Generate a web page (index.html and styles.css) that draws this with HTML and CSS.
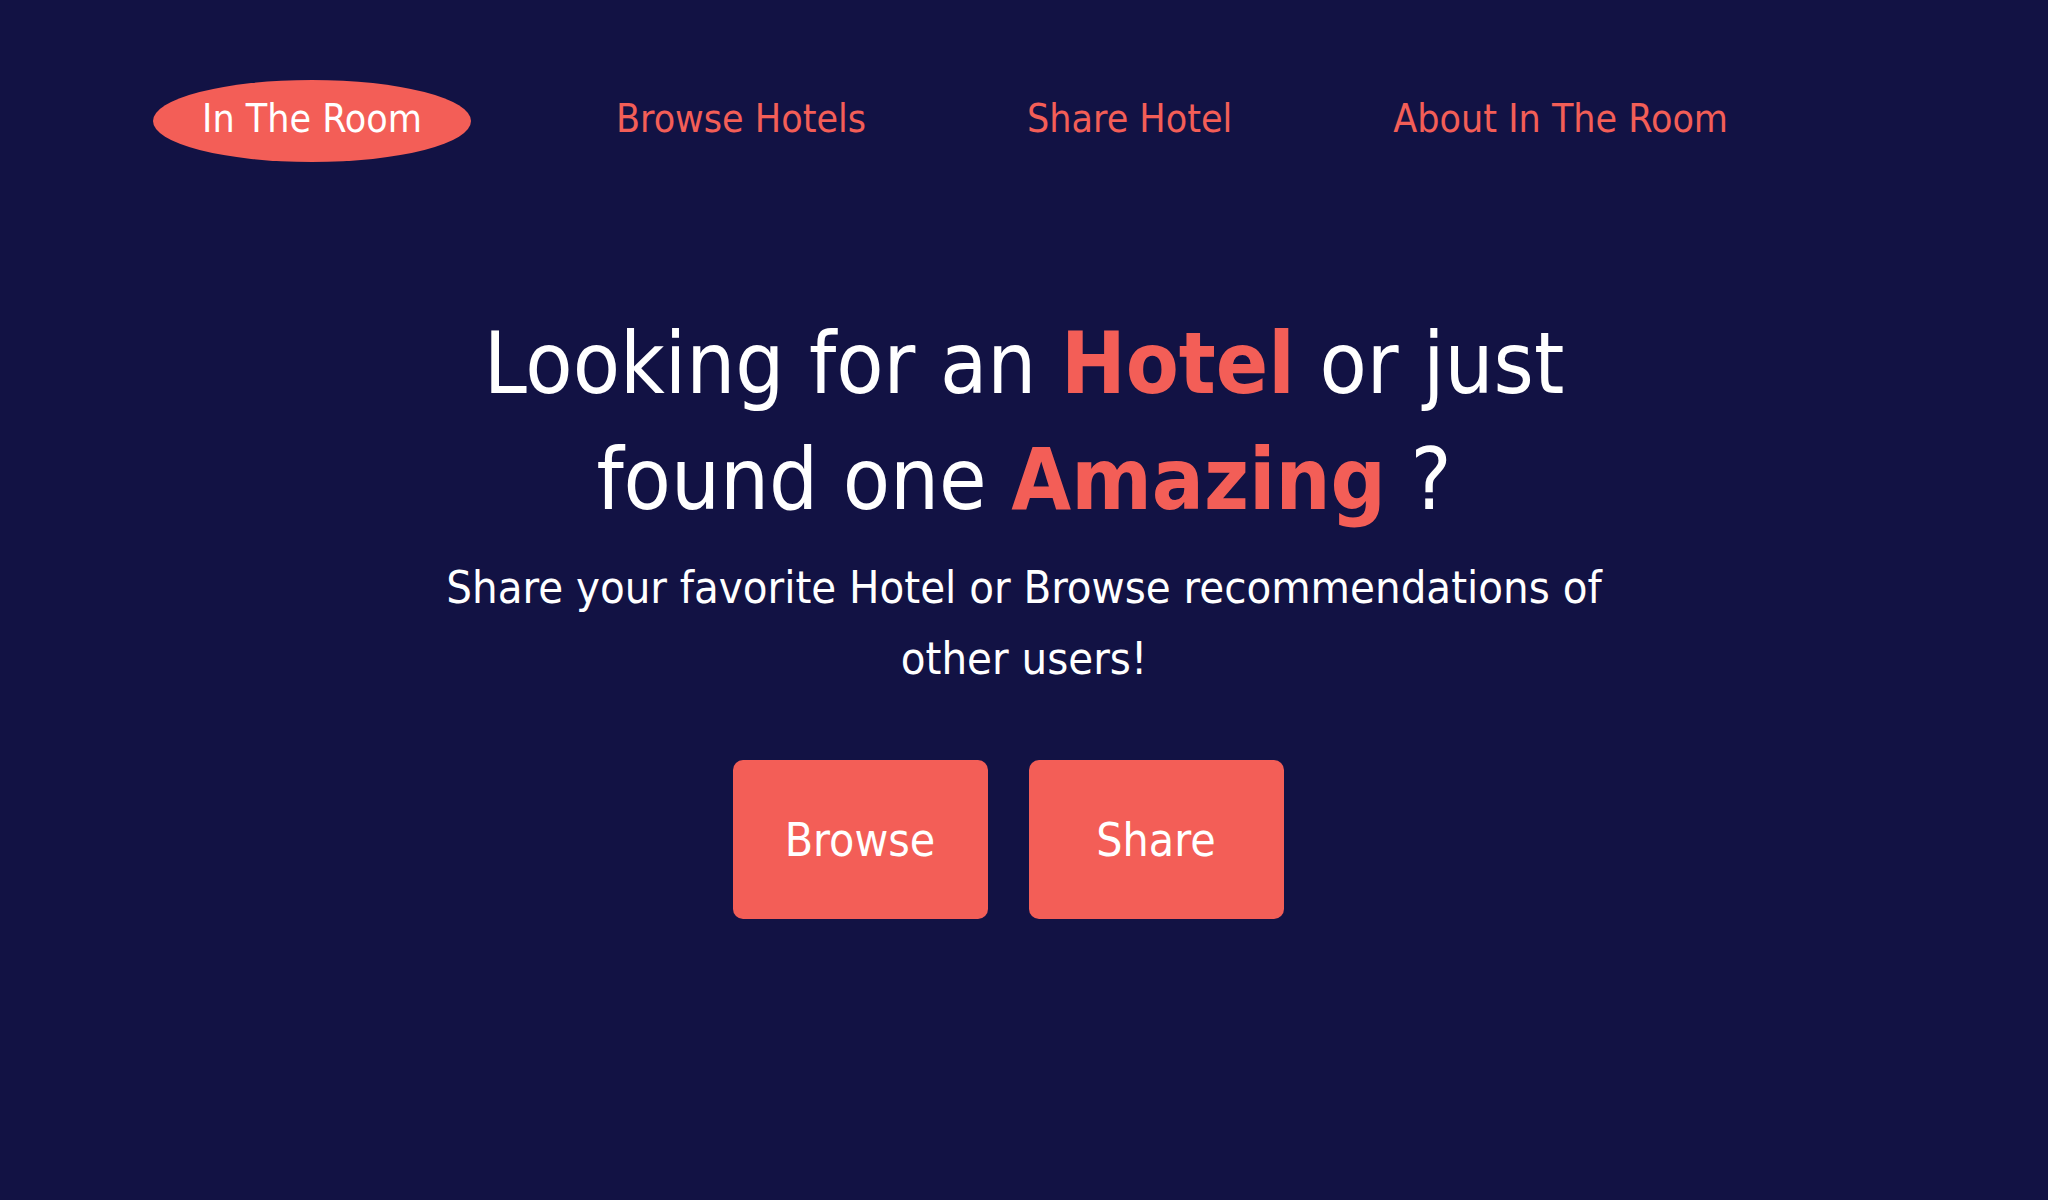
FILE: index.html
```html
<!DOCTYPE html>
<html lang="en">
<head>
<meta charset="utf-8">
<title>In The Room</title>
<link rel="stylesheet" href="styles.css">
</head>
<body>
<header class="nav">
  <a class="nav-brand" href="#">In The Room</a>
  <a class="nav-link" href="#">Browse Hotels</a>
  <a class="nav-link" href="#">Share Hotel</a>
  <a class="nav-link" href="#">About In The Room</a>
</header>
<main class="hero">
  <h1 class="hero-title">Looking for an <span class="accent">Hotel</span> or just<br>found one <span class="accent">Amazing</span> ?</h1>
  <p class="hero-sub">Share your favorite Hotel or Browse recommendations of<br>other users!</p>
  <div class="hero-actions">
    <a class="btn" href="#">Browse</a>
    <a class="btn" href="#">Share</a>
  </div>
</main>
</body>
</html>
```
FILE: styles.css
```css
* { box-sizing: border-box; }
html, body { margin: 0; padding: 0; }
body {
  background: #121244;
  min-height: 1200px;
  font-family: "DejaVu Sans", sans-serif;
  font-stretch: condensed;
  color: #ffffff;
}
a { text-decoration: none; }
.nav {
  display: flex;
  align-items: center;
  padding: 80px 0 0 153px;
}
.nav-brand {
  display: flex;
  align-items: center;
  justify-content: center;
  width: 318px;
  height: 82px;
  padding-bottom: 5px;
  border-radius: 50%;
  background: #f35e57;
  color: #ffffff;
  font-size: 39px;
  margin-right: 145px;
}
.nav-link {
  color: #f35e57;
  font-size: 39px;
  padding-bottom: 5px;
  margin-right: 161px;
}
.hero {
  display: flex;
  flex-direction: column;
  align-items: center;
  text-align: center;
  padding-top: 143px;
}
.hero-title {
  margin: 0;
  font-size: 86px;
  line-height: 116px;
  font-weight: normal;
}
.accent {
  color: #f35e57;
  font-weight: bold;
}
.hero-sub {
  margin: 15px 0 0;
  font-size: 45px;
  line-height: 71px;
}
.hero-actions {
  display: flex;
  gap: 41px;
  margin-top: 66px;
  margin-right: 32px;
}
.btn {
  display: flex;
  align-items: center;
  justify-content: center;
  width: 255px;
  height: 159px;
  border-radius: 10px;
  background: #f35e57;
  color: #ffffff;
  font-size: 46px;
}
```
